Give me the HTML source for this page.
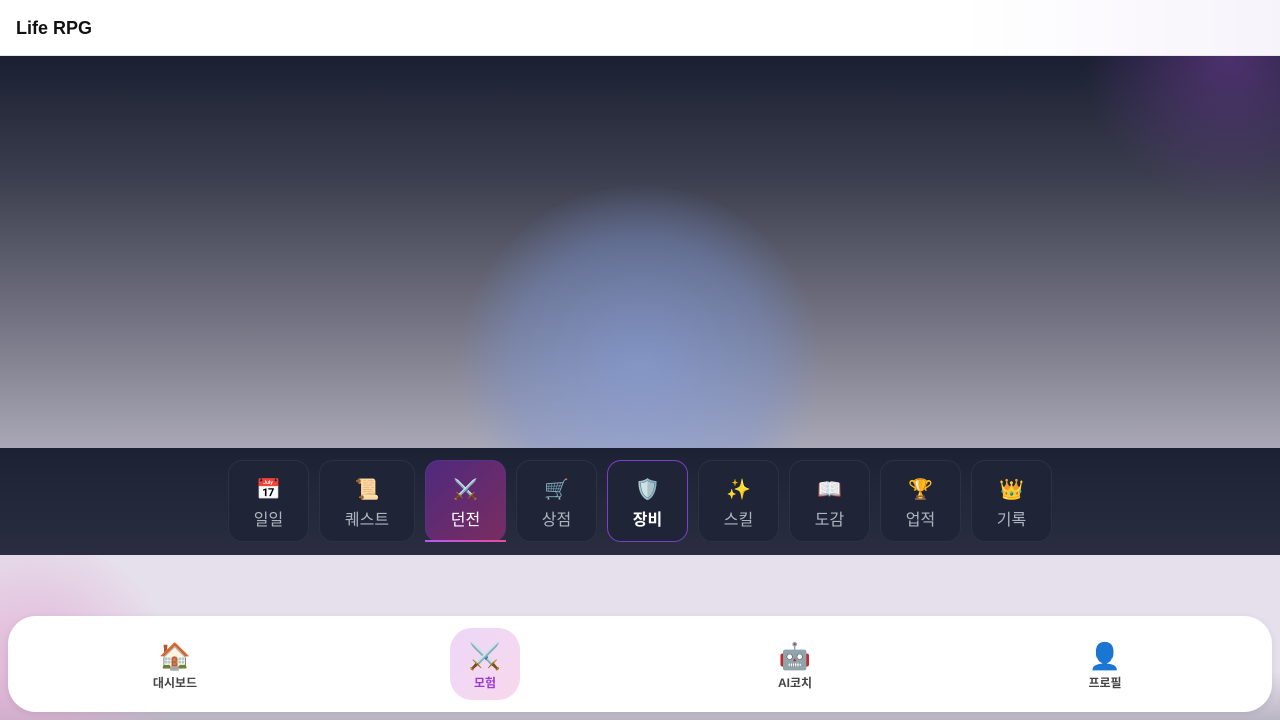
<!DOCTYPE html>
<html style="width:1280px;height:720px;overflow:hidden"><head><meta charset="utf-8"><style>
*{margin:0;padding:0;box-sizing:border-box}
body{width:1280px;height:720px;overflow:hidden;font-family:"Liberation Sans","Noto Sans CJK KR",sans-serif;background:#e6e0ec;position:relative}
.hdr{position:absolute;left:0;top:0;width:1280px;height:56px;background:linear-gradient(90deg,#fff 75%,#f7f3fb);border-bottom:1px solid #e6e6ee}
.hdr b{position:absolute;left:16px;top:18px;font-size:18px;color:#111}
.hero{position:absolute;left:0;top:56px;width:1280px;height:392px;background:linear-gradient(180deg,#1a1f31 0%,#3a3d4d 30%,#777786 70%,#aaa8b6 100%);overflow:hidden}
.glow{position:absolute;left:460px;top:130px;width:360px;height:360px;border-radius:50%;background:radial-gradient(circle,rgba(130,160,230,.6) 0%,rgba(120,150,220,.35) 50%,rgba(120,150,220,0) 72%)}
.pg{position:absolute;left:1080px;top:-150px;width:300px;height:300px;border-radius:50%;background:radial-gradient(circle,rgba(110,60,150,.6),rgba(110,60,150,0) 70%)}
.tabs{position:absolute;left:0;top:448px;width:1280px;height:107px;background:linear-gradient(180deg,#1c2234,#2a2d40)}
.t{position:absolute;top:12px;height:82px;border-radius:14px;background:#1f2536;border:1px solid #2c3244;text-align:center;color:#aeb3c0;font-size:16px}
.t i{display:block;font-style:normal;font-size:20px;margin-top:16px;height:26px;line-height:26px}
.t span{display:block;margin-top:3px}
.t.d{background:linear-gradient(135deg,#4f2a7e,#7a2c60);color:#fff;border-color:#5a3380}
.t.e{border-color:#7a40c8;color:#fff;font-weight:bold}
.ul{position:absolute;left:425px;top:92px;width:81px;height:2px;background:linear-gradient(90deg,#b45bf0,#e64ba0)}
.lw{position:absolute;left:0;top:555px;width:1280px;height:165px;overflow:hidden;background:linear-gradient(180deg,#e6e0ec,#e6e0ec 70%,#bbb6c4)}
.pink{position:absolute;left:-130px;top:-10px;width:320px;height:260px;border-radius:50%;background:radial-gradient(circle,rgba(225,170,210,.85),rgba(225,170,210,0) 70%)}
.nav{position:absolute;left:8px;top:616px;width:1264px;height:96px;background:#fff;border-radius:28px;box-shadow:0 2px 8px rgba(0,0,0,.08)}
.n{position:absolute;top:12px;width:70px;height:72px;text-align:center;font-size:12px;color:#444;font-weight:bold}
.n i{display:block;font-style:normal;font-size:26px;height:32px;line-height:32px;margin-top:12px;margin-bottom:2px}
.n.a{background:linear-gradient(135deg,#ecd8f8,#f8d8ec);border-radius:22px;color:#9a3bd8}
</style></head><body>
<div class="hdr"><b>Life RPG</b></div>
<div class="hero"><div class="glow"></div><div class="pg"></div></div>
<div class="tabs">
<div class="t" style="left:228px;width:81px"><i>📅</i><span>일일</span></div>
<div class="t" style="left:319px;width:96px"><i>📜</i><span>퀘스트</span></div>
<div class="t d" style="left:425px;width:81px"><i>⚔️</i><span>던전</span></div>
<div class="t" style="left:516px;width:81px"><i>🛒</i><span>상점</span></div>
<div class="t e" style="left:607px;width:81px"><i>🛡️</i><span>장비</span></div>
<div class="t" style="left:698px;width:81px"><i>✨</i><span>스킬</span></div>
<div class="t" style="left:789px;width:81px"><i>📖</i><span>도감</span></div>
<div class="t" style="left:880px;width:81px"><i>🏆</i><span>업적</span></div>
<div class="t" style="left:971px;width:81px"><i>👑</i><span>기록</span></div>
<div class="ul"></div>
</div>
<div class="lw"><div class="pink"></div></div>
<div class="nav">
<div class="n" style="left:132px"><i>🏠</i>대시보드</div>
<div class="n a" style="left:442px"><i>⚔️</i>모험</div>
<div class="n" style="left:752px"><i>🤖</i>AI코치</div>
<div class="n" style="left:1062px"><i>👤</i>프로필</div>
</div>
</body></html>
